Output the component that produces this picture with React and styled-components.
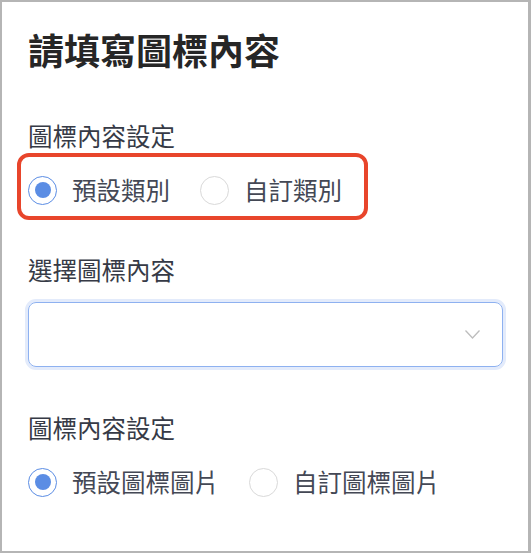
import React, { useState } from "react";
import styled, { createGlobalStyle } from "styled-components";

const GlobalStyle = createGlobalStyle`
  html, body {
    margin: 0;
    padding: 0;
    background: #ffffff;
  }
  body {
    font-family: "Noto Sans CJK TC", "Noto Sans", sans-serif;
  }
`;

const Frame = styled.div`
  box-sizing: border-box;
  width: 531px;
  height: 553px;
  border: 2px solid #b5b5b5;
  border-right-width: 3px;
  padding: 22px 26px 0 26px;
  background: #fff;
`;

const Title = styled.h1`
  margin: 0 0 45px;
  font-size: 36px;
  line-height: 50px;
  font-weight: 700;
  color: #262626;
`;

const Label = styled.div`
  font-size: 24.5px;
  line-height: 34px;
  color: #363a46;
  margin-top: ${(p) => p.$top || 0}px;
`;

const RadioRow = styled.div`
  position: relative;
  display: flex;
  align-items: center;
  gap: 30px;
  height: 34px;
  margin-top: ${(p) => p.$top || 20}px;
`;

const Highlight = styled.div`
  position: absolute;
  left: -11px;
  top: -20px;
  width: 351px;
  height: 67px;
  box-sizing: border-box;
  border: 4px solid #e8452b;
  border-radius: 12px;
  pointer-events: none;
`;

const Option = styled.label`
  display: flex;
  align-items: center;
  gap: 15px;
  cursor: pointer;
`;

const Circle = styled.span`
  box-sizing: border-box;
  width: 29px;
  height: 29px;
  border-radius: 50%;
  border: 1px solid ${(p) => (p.$checked ? "#5b8de4" : "#d9d9d9")};
  display: flex;
  align-items: center;
  justify-content: center;
  background: #fff;

  &::after {
    content: "";
    width: 16px;
    height: 16px;
    border-radius: 50%;
    background: #5b8de4;
    display: ${(p) => (p.$checked ? "block" : "none")};
  }
`;

const OptionText = styled.span`
  font-size: 24.5px;
  line-height: 34px;
  color: #444855;
`;

const Select = styled.div`
  box-sizing: border-box;
  margin-top: 15px;
  width: 475px;
  height: 65px;
  border: 1.5px solid #8eb1f0;
  border-radius: 8px;
  box-shadow: 0 0 0 3px #e3ebfb;
  display: flex;
  align-items: center;
  justify-content: flex-end;
  padding-right: 22px;
`;

const Chevron = () => (
  <svg width="15" height="9" viewBox="0 0 15 9" fill="none">
    <polyline points="0.5,0.5 7.5,8 14.5,0.5" stroke="#bdbdbd" strokeWidth="1.3" />
  </svg>
);

function RadioGroup({ options, top, highlight }) {
  const [value, setValue] = useState(0);
  return (
    <RadioRow $top={top}>
      {options.map((o, i) => (
        <Option key={o} onClick={() => setValue(i)}>
          <Circle $checked={value === i} />
          <OptionText>{o}</OptionText>
        </Option>
      ))}
      {highlight && <Highlight />}
    </RadioRow>
  );
}

export default function App() {
  return (
    <>
      <GlobalStyle />
      <Frame>
        <Title>請填寫圖標內容</Title>
        <Label>圖標內容設定</Label>
        <RadioGroup options={["預設類別", "自訂類別"]} highlight />
        <Label $top={46}>選擇圖標內容</Label>
        <Select>
          <Chevron />
        </Select>
        <Label $top={44}>圖標內容設定</Label>
        <RadioGroup options={["預設圖標圖片", "自訂圖標圖片"]} />
      </Frame>
    </>
  );
}
